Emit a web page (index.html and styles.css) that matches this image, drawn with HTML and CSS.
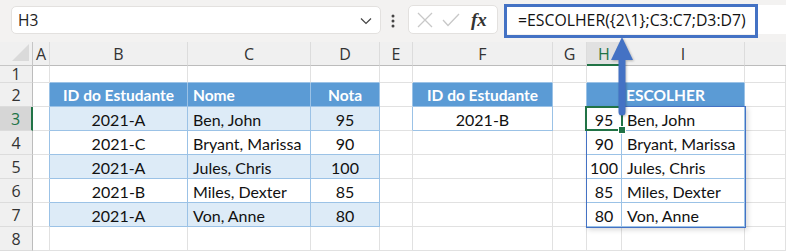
FILE: index.html
```html
<!DOCTYPE html>
<html>
<head>
    <meta charset="UTF-8">
    <title>ESCOLHER</title>
    <link rel="stylesheet" href="styles.css">
</head>
<body>
    <!-- Name box and formula bar -->
    <div class="toolbar">
        <div class="namebox">
            <span>H3</span>
            <svg class="chevron" width="12" height="8" viewBox="0 0 12 8"><path d="M1 1.5 L6 6.5 L11 1.5" fill="none" stroke="#444" stroke-width="1.2"/></svg>
        </div>
        <svg class="dots" width="4" height="14" viewBox="0 0 4 14"><circle cx="2" cy="2" r="1.5"/><circle cx="2" cy="7" r="1.5"/><circle cx="2" cy="12" r="1.5"/></svg>
        <div class="fxbox">
            <svg width="16" height="16" viewBox="0 0 16 16"><path d="M1 1 L15 15 M15 1 L1 15" stroke="#c8c8c8" stroke-width="1.3"/></svg>
            <svg width="18" height="14" viewBox="0 0 18 14"><path d="M1 7 L6 12.5 L17 1" fill="none" stroke="#c8c8c8" stroke-width="1.3"/></svg>
            <span class="fx">fx</span>
        </div>
        <div class="formulabar">
            <div class="formula">=ESCOLHER({2\1};C3:C7;D3:D7)</div>
        </div>
    </div>

    <!-- Worksheet -->
    <div class="sheet">
        <!-- column headers -->
        <div class="corner"></div>
        <div class="hd">A</div>
        <div class="hd">B</div>
        <div class="hd">C</div>
        <div class="hd">D</div>
        <div class="hd">E</div>
        <div class="hd">F</div>
        <div class="hd">G</div>
        <div class="hd sel">H</div>
        <div class="hd">I</div>
        <div class="hd last"></div>

        <!-- row 1 -->
        <div class="rh">1</div>
        <div class="c"></div>
        <div class="c tb-b"></div>
        <div class="c tb-b"></div>
        <div class="c tb-b"></div>
        <div class="c"></div>
        <div class="c tb-b"></div>
        <div class="c"></div>
        <div class="c tb-b"></div>
        <div class="c tb-b"></div>
        <div class="c"></div>

        <!-- row 2 -->
        <div class="rh">2</div>
        <div class="c tb-r"></div>
        <div class="c th mid">ID do Estudante</div>
        <div class="c th">Nome</div>
        <div class="c th mid">Nota</div>
        <div class="c tb-r"></div>
        <div class="c th mid">ID do Estudante</div>
        <div class="c tb-r"></div>
        <div class="c th mid span2">ESCOLHER</div>
        <div class="c"></div>

        <!-- row 3 -->
        <div class="rh sel">3</div>
        <div class="c tb-r"></div>
        <div class="c tb band mid">2021-A</div>
        <div class="c tb band">Ben, John</div>
        <div class="c tb band mid">95</div>
        <div class="c tb-r"></div>
        <div class="c tb mid">2021-B</div>
        <div class="c tb-r"></div>
        <div class="c tb mid">95</div>
        <div class="c tb">Ben, John</div>
        <div class="c"></div>

        <!-- row 4 -->
        <div class="rh">4</div>
        <div class="c tb-r"></div>
        <div class="c tb mid">2021-C</div>
        <div class="c tb">Bryant, Marissa</div>
        <div class="c tb mid">90</div>
        <div class="c"></div>
        <div class="c"></div>
        <div class="c tb-r"></div>
        <div class="c tb mid">90</div>
        <div class="c tb">Bryant, Marissa</div>
        <div class="c"></div>

        <!-- row 5 -->
        <div class="rh">5</div>
        <div class="c tb-r"></div>
        <div class="c tb band mid">2021-A</div>
        <div class="c tb band">Jules, Chris</div>
        <div class="c tb band mid">100</div>
        <div class="c"></div>
        <div class="c"></div>
        <div class="c tb-r"></div>
        <div class="c tb mid">100</div>
        <div class="c tb">Jules, Chris</div>
        <div class="c"></div>

        <!-- row 6 -->
        <div class="rh">6</div>
        <div class="c tb-r"></div>
        <div class="c tb mid">2021-B</div>
        <div class="c tb">Miles, Dexter</div>
        <div class="c tb mid">85</div>
        <div class="c"></div>
        <div class="c"></div>
        <div class="c tb-r"></div>
        <div class="c tb mid">85</div>
        <div class="c tb">Miles, Dexter</div>
        <div class="c"></div>

        <!-- row 7 -->
        <div class="rh">7</div>
        <div class="c tb-r"></div>
        <div class="c tb band mid">2021-A</div>
        <div class="c tb band">Von, Anne</div>
        <div class="c tb band mid">80</div>
        <div class="c"></div>
        <div class="c"></div>
        <div class="c tb-r"></div>
        <div class="c tb mid">80</div>
        <div class="c tb">Von, Anne</div>
        <div class="c"></div>

        <!-- row 8 -->
        <div class="rh">8</div>
        <div class="c"></div>
        <div class="c"></div>
        <div class="c"></div>
        <div class="c"></div>
        <div class="c"></div>
        <div class="c"></div>
        <div class="c"></div>
        <div class="c"></div>
        <div class="c"></div>
        <div class="c"></div>

        <!-- spill range outline, active cell and callout arrow -->
        <div class="spill"></div>
        <div class="active"><span class="handle"></span></div>
    </div>

    <svg class="arrow" width="30" height="84" viewBox="0 0 30 84">
        <polygon points="15,1 4,24 26,24" fill="#4472c4"/>
        <path d="M11.5 22 H18.5 V76 A3.5 3.5 0 0 1 11.5 76 Z" fill="#4472c4"/>
    </svg>
</body>
</html>
```

FILE: styles.css
```css
body {
    margin: 0;
    width: 786px;
    height: 252px;
    overflow: hidden;
    background: #fff;
    font-family: "Lato", sans-serif;
    position: relative;
}

/* ---------- toolbar ---------- */

.toolbar {
    height: 42px;
    background: #f3f2f1;
    display: flex;
    align-items: flex-start;
    padding-left: 11px;
    font-family: "Open Sans", sans-serif;
}

.namebox {
    width: 370px;
    height: 28px;
    margin-top: 6px;
    box-sizing: border-box;
    background: #fff;
    border: 1px solid #e3e1df;
    border-radius: 5px;
    display: flex;
    align-items: center;
    justify-content: space-between;
    padding: 0 8px 0 6px;
    font-size: 15.5px;
    color: #222;
}

.chevron {
    margin-top: 2px;
}

.dots {
    fill: #444;
    margin: 14px 0 0 10px;
}

.fxbox {
    width: 90px;
    height: 29px;
    margin: 5px 0 0 13px;
    box-sizing: border-box;
    background: #fff;
    border: 1px solid #e3e1df;
    border-radius: 5px;
    display: flex;
    align-items: center;
    gap: 9px;
    padding-left: 8px;
}

.fx {
    font-family: "Liberation Serif", serif;
    font-style: italic;
    font-size: 19px;
    font-weight: bold;
    color: #333;
    margin-left: 2px;
}

.formulabar {
    flex: 1;
    height: 29px;
    margin: 5px 0 0 6px;
    background: #fff;
    border-radius: 5px 0 0 5px;
}

.formula {
    width: 254px;
    height: 34px;
    margin-top: -1px;
    box-sizing: border-box;
    border: 3px solid #4472c4;
    padding-left: 11px;
    font-size: 15.8px;
    line-height: 27px;
    color: #111;
    white-space: nowrap;
}

/* ---------- grid ---------- */

.sheet {
    position: relative;
    display: grid;
    grid-template-columns: 33px 17px 138px 123px 69px 33px 140px 34px 35px 123px 41px;
    grid-template-rows: 24px 17px repeat(7, 24px);
    font-size: 16px;
    color: #111;
}

.corner {
    background: #f0f0f0;
    border-right: 1px solid #c6c6c6;
    border-bottom: 1px solid #c6c6c6;
    position: relative;
}

.corner::after {
    content: "";
    position: absolute;
    right: 3px;
    bottom: 4px;
    width: 17px;
    height: 17px;
    background: #dadada;
    clip-path: polygon(100% 0, 100% 100%, 0 100%);
}

.hd {
    background: #f0f0f0;
    border-right: 1px solid #dcdcdc;
    border-bottom: 1px solid #bcbcbc;
    font-family: "Open Sans", sans-serif;
    font-size: 16px;
    color: #333;
    display: flex;
    align-items: center;
    justify-content: center;
    padding-top: 1px;
}

.hd.last {
    border-right: none;
}

.hd.sel {
    background: #e1e1e1;
    color: #217346;
    border-bottom: 2px solid #217346;
}

.rh {
    background: #f0f0f0;
    border-right: 1px solid #bcbcbc;
    border-bottom: 1px solid #dcdcdc;
    font-family: "Open Sans", sans-serif;
    font-size: 16px;
    color: #333;
    display: flex;
    align-items: center;
    justify-content: center;
}

.rh.sel {
    background: #d6d6d6;
    color: #217346;
    border-right: 2px solid #217346;
}

.c {
    border-right: 1px solid #e1e1e1;
    border-bottom: 1px solid #e1e1e1;
    display: flex;
    align-items: center;
    padding: 1px 5px 0;
    white-space: nowrap;
    overflow: visible;
}

.c.mid {
    justify-content: center;
    padding: 1px 0 0;
}

/* neighbours of a table: their edge is the table's outer line */
.c.tb-r {
    border-right-color: #9bc2e6;
}

.c.tb-b {
    border-bottom-color: #9bc2e6;
}

.c.tb {
    border-right-color: #9bc2e6;
    border-bottom-color: #9bc2e6;
}

.c.band {
    background: #ddebf7;
}

.c.th {
    background: #5b9bd5;
    color: #fff;
    font-weight: bold;
    font-size: 15.5px;
    border-right-color: #9bc2e6;
    border-bottom-color: #9bc2e6;
}

.span2 {
    grid-column: span 2;
}

.spill {
    position: absolute;
    left: 586px;
    top: 64px;
    width: 160px;
    height: 122px;
    box-sizing: border-box;
    border: 1px solid #4472c4;
    box-shadow: 2px 2px 5px rgba(0, 0, 0, 0.15);
    pointer-events: none;
}

.active {
    position: absolute;
    left: 585px;
    top: 64px;
    width: 38px;
    height: 25px;
    box-sizing: border-box;
    border: 2px solid #217346;
}

.handle {
    position: absolute;
    right: -5px;
    bottom: -5px;
    width: 6px;
    height: 6px;
    background: #217346;
    border: 1px solid #fff;
}

.arrow {
    position: absolute;
    left: 607px;
    top: 36px;
    filter: drop-shadow(1px 1px 1px rgba(0, 0, 0, 0.25));
}
```
